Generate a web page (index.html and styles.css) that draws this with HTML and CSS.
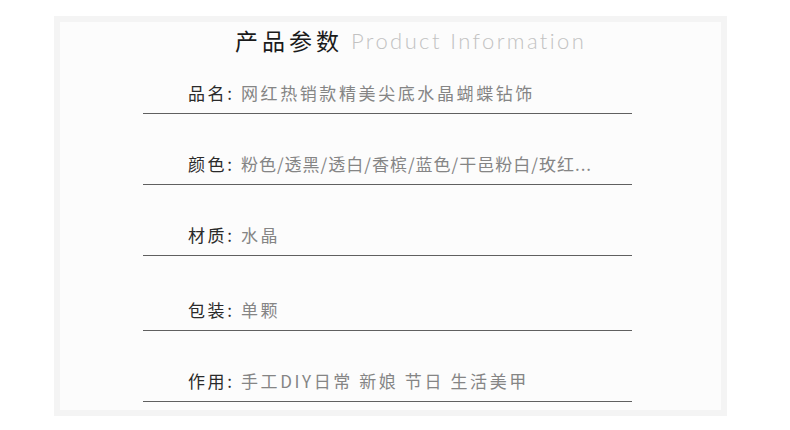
FILE: index.html
```html
<!DOCTYPE html>
<html lang="zh-CN">
<head>
    <meta charset="utf-8">
    <title>产品参数</title>
    <link rel="stylesheet" href="styles.css">
</head>
<body>
    <div class="panel">
        <div class="title">
            <span class="cn">产品参数</span>
            <span class="en">Product Information</span>
        </div>

        <div class="list">
            <div class="row"><span class="k">品名: </span><span class="v">网红热销款精美尖底水晶蝴蝶钻饰</span></div>
            <div class="row"><span class="k">颜色: </span><span class="v tight">粉色/透黑/透白/香槟/蓝色/干邑粉白/玫红...</span></div>
            <div class="row"><span class="k">材质: </span><span class="v">水晶</span></div>
            <div class="row"><span class="k">包装: </span><span class="v">单颗</span></div>
            <div class="row"><span class="k">作用: </span><span class="v">手工DIY日常 新娘 节日 生活美甲</span></div>
        </div>
    </div>
</body>
</html>
```

FILE: styles.css
```css
/* Colores */
:root {
    --line: #606060;
    --label: #2a2a2a;
    --value: #858585;
}

html, body {
    margin: 0;
    padding: 0;
    background-color: #ffffff;
}

body {
    font-family: "Noto Sans CJK SC", "Noto Sans", sans-serif;
}

/* Panel */
.panel {
    box-sizing: border-box;
    width: 673px;
    height: 400px;
    margin: 16px 0 0 54px;
    border: 6px solid #f4f4f4;
    background-color: #fcfcfc;
}

.title {
    display: flex;
    align-items: center;
    height: 36px;
    padding-left: 175px;
}

.title .cn {
    font-size: 23px;
    letter-spacing: 4px;
    color: #1a1a1a;
}

.title .en {
    margin-left: 8px;
    font-family: Lato, "Open Sans", sans-serif;
    font-weight: 300;
    font-size: 22px;
    letter-spacing: 2.4px;
    color: #c2c2c2;
}

/* Lista de parametros */
.list {
    width: 489px;
    margin: 25px 0 0 83px;
}

.row {
    padding: 0 0 10px 45px;
    border-bottom: 1px solid var(--line);
    font-size: 17px;
    line-height: 20px;
    letter-spacing: 2.6px;
    white-space: nowrap;
}

.row + .row {
    margin-top: 40px;
}

.row:nth-child(4) {
    margin-top: 44px;
}

.k {
    color: var(--label);
}

.v {
    color: var(--value);
}

.v.tight {
    letter-spacing: 1px;
}
```
